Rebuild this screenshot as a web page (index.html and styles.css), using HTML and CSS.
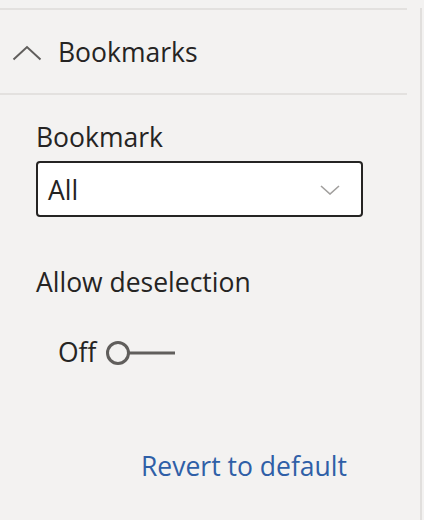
FILE: index.html
```html
<!DOCTYPE html>
<html>
<head>
<meta charset="utf-8">
<link rel="stylesheet" href="styles.css">
</head>
<body>
<div class="panel">
  <div class="rule rule-top"></div>
  <div class="header">
    <svg class="chev-up" width="30" height="16" viewBox="0 0 30 16"><path d="M1.5 14.5 L15 2 L28.5 14.5" fill="none" stroke="#605e5c" stroke-width="2"/></svg>
    <span class="title">Bookmarks</span>
  </div>
  <div class="rule"></div>
  <div class="content">
    <div class="label">Bookmark</div>
    <div class="select">
      <span class="select-value">All</span>
      <svg class="chev-down" width="20" height="10" viewBox="0 0 20 10"><path d="M1 1 L10 9 L19 1" fill="none" stroke="#a19f9d" stroke-width="1.6"/></svg>
    </div>
    <div class="label label-gap">Allow deselection</div>
    <div class="toggle-row">
      <span class="toggle-text">Off</span>
      <svg class="toggle" width="70" height="26" viewBox="0 0 70 26"><circle cx="12" cy="13" r="10.5" fill="none" stroke="#605e5c" stroke-width="3"/><line x1="22.5" y1="13" x2="69" y2="13" stroke="#605e5c" stroke-width="3"/></svg>
    </div>
    <div class="revert-row"><span class="revert">Revert to default</span></div>
  </div>
</div>
</body>
</html>
```

FILE: styles.css
```css
html, body {
  margin: 0;
  padding: 0;
  background: #f3f2f1;
}
body {
  font-family: "Open Sans", "Noto Sans", sans-serif;
  color: #252423;
}
.panel {
  width: 420px;
  height: 520px;
  border-right: 2px solid #e1dfdd;
  box-sizing: content-box;
}
.rule {
  height: 2px;
  background: #e3e1df;
  margin-right: 13px;
}
.rule-top {
  margin-top: 8px;
}
.header {
  height: 83px;
  display: flex;
  align-items: center;
  padding-left: 12px;
}
.chev-up {
  display: block;
  margin-top: 2px;
}
.title {
  margin-left: 16px;
  font-size: 26.5px;
  line-height: 30px;
}
.content {
  padding-left: 36px;
}
.label {
  font-size: 26.5px;
  line-height: 30px;
  margin-top: 27px;
}
.label-gap {
  margin-top: 50px;
}
.select {
  margin-top: 9px;
  width: 327px;
  height: 56px;
  border: 2px solid #252423;
  border-radius: 4px;
  background: #ffffff;
  display: flex;
  align-items: center;
  justify-content: space-between;
  padding: 2px 21px 0 10px;
  box-sizing: border-box;
}
.select-value {
  font-size: 26.5px;
  line-height: 30px;
}
.toggle-row {
  margin-top: 40px;
  padding-left: 22px;
  display: flex;
  align-items: center;
}
.toggle-text {
  font-size: 26.5px;
  line-height: 30px;
}
.toggle {
  display: block;
  margin-left: 10px;
  margin-top: 2px;
}
.revert-row {
  margin-top: 84px;
  padding-left: 105px;
}
.revert {
  font-size: 26.5px;
  line-height: 30px;
  color: #2f5fa7;
}
```
